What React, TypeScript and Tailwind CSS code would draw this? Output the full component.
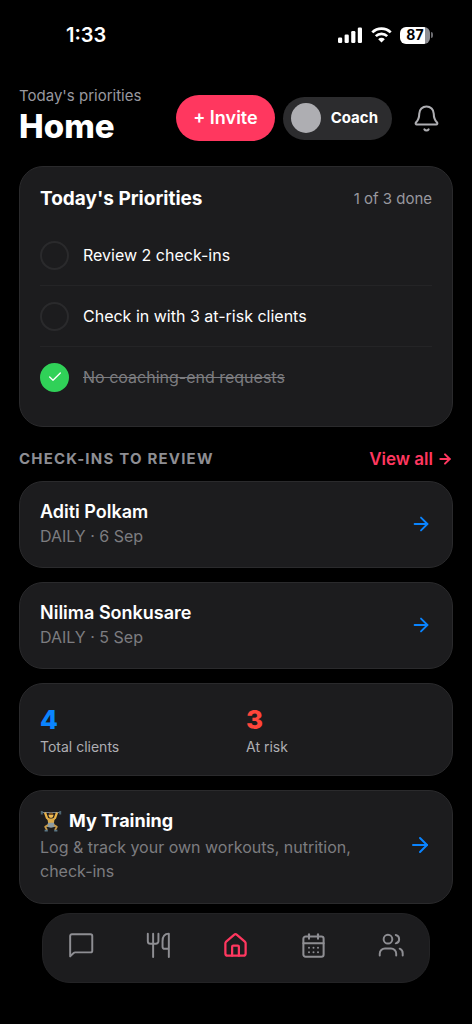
import { useState } from 'react';
import type { ReactNode } from 'react';
import { ArrowRight, Bell, CalendarDays, Check, House } from 'lucide-react';

interface Priority {
  id: string;
  label: string;
  done: boolean;
}

interface CheckIn {
  id: string;
  name: string;
  detail: string;
}

const initialPriorities: Priority[] = [
  { id: 'review', label: 'Review 2 check-ins', done: false },
  { id: 'at-risk', label: 'Check in with 3 at-risk clients', done: false },
  { id: 'requests', label: 'No coaching-end requests', done: true },
];

const checkIns: CheckIn[] = [
  { id: 'aditi', name: 'Aditi Polkam', detail: 'DAILY · 6 Sep' },
  { id: 'nilima', name: 'Nilima Sonkusare', detail: 'DAILY · 5 Sep' },
];

function StatusBar() {
  return (
    <div className="flex h-[70px] items-center justify-between pl-[66px] pr-[39px]">
      <span className="text-xl font-semibold">1:33</span>
      <div className="flex items-center gap-2">
        <svg width="25" height="16" viewBox="0 0 25 16" fill="currentColor" aria-hidden="true">
          <rect x="0" y="10.5" width="4.2" height="5.5" rx="1.3" />
          <rect x="6.6" y="7.5" width="4.2" height="8.5" rx="1.3" />
          <rect x="13.2" y="4" width="4.2" height="12" rx="1.3" />
          <rect x="19.8" y="0.5" width="4.2" height="15.5" rx="1.3" />
        </svg>
        <svg width="21" height="16" viewBox="0 0 21 16" fill="none" stroke="currentColor" aria-hidden="true">
          <path d="M1.3 5.4a13 13 0 0 1 18.4 0" strokeWidth="2.7" />
          <path d="M4.8 9.2a8.1 8.1 0 0 1 11.4 0" strokeWidth="2.6" />
          <path d="M10.5 15.4 7.2 12.2a4.7 4.7 0 0 1 6.6 0z" fill="currentColor" stroke="none" />
        </svg>
        <div className="flex items-center gap-px">
          <div className="flex h-[17px] w-[30px] items-center justify-center rounded-[6px] bg-linear-to-r from-white from-85% to-[#8e8e93] to-85% text-sm font-bold text-black">
            87
          </div>
          <div className="h-[6px] w-[2px] rounded-r-full bg-[#6b6b6f]" />
        </div>
      </div>
    </div>
  );
}

function Header() {
  return (
    <header className="flex items-center justify-between pt-4 pb-5">
      <div>
        <p className="text-[15px] leading-5 text-[#98989f]">Today's priorities</p>
        <h1 className="text-[33px] leading-[40px] font-extrabold">Home</h1>
      </div>
      <div className="flex items-center pt-1">
        <button type="button" className="h-[46px] rounded-full bg-[#ff375f] px-[17px] text-lg font-semibold">
          + Invite
        </button>
        <button
          type="button"
          className="ml-2 flex h-[43px] items-center gap-[10px] rounded-full bg-[#2c2c2e] pr-[14px] pl-2 text-[15px] font-bold"
        >
          <span className="h-[30px] w-[30px] rounded-full bg-[#aeaeb2]" />
          Coach
        </button>
        <button type="button" aria-label="Notifications" className="ml-5 mr-3 text-[#aeaeb2]">
          <Bell size={29} strokeWidth={1.7} />
        </button>
      </div>
    </header>
  );
}

function Card({ children }: { children: ReactNode }) {
  return <section className="rounded-3xl border border-[#2a2a2c] bg-[#1c1c1e] px-5">{children}</section>;
}

function PriorityList() {
  const [priorities, setPriorities] = useState(initialPriorities);
  const doneCount = priorities.filter((p) => p.done).length;

  const toggle = (id: string) => {
    setPriorities(priorities.map((p) => (p.id === id ? { ...p, done: !p.done } : p)));
  };

  return (
    <Card>
      <div className="flex items-center justify-between pt-[18px] pb-3">
        <h2 className="text-[19px] leading-7 font-bold">Today's Priorities</h2>
        <span className="text-[15px] text-[#98989f]">
          {doneCount} of {priorities.length} done
        </span>
      </div>
      <ul className="divide-y divide-[#242426] pb-[19px]">
        {priorities.map((p) => (
          <li key={p.id}>
            <label className="flex h-[60px] items-center gap-[14px]">
              <span className="relative flex h-[29px] w-[29px]">
                <input
                  type="checkbox"
                  checked={p.done}
                  onChange={() => toggle(p.id)}
                  className="h-full w-full appearance-none rounded-full border-2 border-[#2a2a2c] checked:border-[#30d158] checked:bg-[#30d158]"
                />
                {p.done && <Check size={16} strokeWidth={2} className="pointer-events-none absolute inset-0 m-auto" />}
              </span>
              <span className={p.done ? 'text-base text-[#7c7c80] line-through' : 'text-base'}>{p.label}</span>
            </label>
          </li>
        ))}
      </ul>
    </Card>
  );
}

function CheckInCard({ checkIn }: { checkIn: CheckIn }) {
  return (
    <Card>
      <a href="#check-in" className="flex items-center justify-between pt-[18px] pb-[19px]">
        <div>
          <h3 className="text-lg leading-6 font-semibold">{checkIn.name}</h3>
          <p className="text-base leading-6 text-[#7c7c80]">{checkIn.detail}</p>
        </div>
        <ArrowRight size={22} strokeWidth={2} className="text-[#0a84ff]" />
      </a>
    </Card>
  );
}

function Stats() {
  return (
    <Card>
      <div className="grid grid-cols-2 gap-5 pt-5 pb-[17px]">
        <div>
          <p className="text-[26px] leading-8 font-extrabold text-[#0a84ff]">4</p>
          <p className="text-sm leading-[22px] text-[#aeaeb2]">Total clients</p>
        </div>
        <div>
          <p className="text-[26px] leading-8 font-extrabold text-[#ff453a]">3</p>
          <p className="text-sm leading-[22px] text-[#aeaeb2]">At risk</p>
        </div>
      </div>
    </Card>
  );
}

function LifterIcon() {
  return (
    <svg width="22" height="22" viewBox="0 0 22 22" fill="none" role="img" aria-label="Weight lifter">
      <path d="M1 2.5h20" stroke="#76828c" strokeWidth="1" />
      <path d="M1.8 1v3.4M20.2 1v3.4" stroke="#4d6672" strokeWidth="2" />
      <path d="M5 2.5 7 8l3 2.5M17 2.5 15 8l-3 2.5" stroke="#e8b24a" strokeWidth="2.2" strokeLinejoin="round" />
      <circle cx="11" cy="5.6" r="2.4" fill="#efba50" />
      <path d="M8.6 5a2.4 2.4 0 0 1 4.8 0z" fill="#7c5425" />
      <path d="M7.4 8.6h7.2l-.9 6H8.3z" fill="#d9a94a" />
      <path d="M8 12.8h6l1.2 4-4.2 1-4.2-1z" fill="#8c9ca4" />
      <path d="m8 15-2.8 1.8L7 20M14 15l2.8 1.8L15 20" stroke="#c99a48" strokeWidth="1.8" strokeLinejoin="round" />
      <path d="M4.6 20.6h3.2M14.2 20.6h3.2" stroke="#5c7886" strokeWidth="1.6" />
    </svg>
  );
}

function TrainingCard() {
  return (
    <Card>
      <a href="#training" className="flex items-center justify-between gap-8 pt-4 pb-5">
        <div>
          <h3 className="flex items-center gap-[7px] text-lg leading-7 font-bold">
            <LifterIcon />
            My Training
          </h3>
          <p className="text-base leading-6 text-[#7c7c80]">
            Log &amp; track your own workouts, nutrition, check-ins
          </p>
        </div>
        <ArrowRight size={24} strokeWidth={2} className="shrink-0 text-[#0a84ff]" />
      </a>
    </Card>
  );
}

function NavIcon({ children }: { children: ReactNode }) {
  return (
    <svg
      width="26"
      height="26"
      viewBox="0 0 24 24"
      fill="none"
      stroke="currentColor"
      strokeWidth="1.8"
      strokeLinecap="round"
      strokeLinejoin="round"
      aria-hidden="true"
    >
      {children}
    </svg>
  );
}

const tabs = [
  {
    label: 'Messages',
    icon: (
      <NavIcon>
        <path d="M2 22.5V3.6A1.6 1.6 0 0 1 3.6 2h17.2a1.6 1.6 0 0 1 1.6 1.6v13.6a1.6 1.6 0 0 1-1.6 1.6H6.6a2 2 0 0 0-1.4.6z" />
      </NavIcon>
    ),
  },
  {
    label: 'Nutrition',
    icon: (
      <NavIcon>
        <path d="M2.6 1.5v7A2.4 2.4 0 0 0 5 10.9h5a2.4 2.4 0 0 0 2.4-2.4v-7M7.5 1.5V23" />
        <path d="M22 23V1.5c-4 0-5.800 3.200-5.800 7v5a2 2 0 0 0 2 2H22" />
      </NavIcon>
    ),
  },
  { label: 'Home', icon: <House size={27} strokeWidth={2} />, active: true },
  { label: 'Calendar', icon: <CalendarDays size={27} strokeWidth={1.8} /> },
  {
    label: 'Clients',
    icon: (
      <NavIcon>
        <circle cx="9.2" cy="6.6" r="4" />
        <path d="M1.6 21.800v-1.800a4.800 4.800 0 0 1 4.800-4.800h5.600a4.800 4.800 0 0 1 4.800 4.800v1.800" />
        <path d="M16.4 2.700a4 4 0 0 1 0 7.800M20 15.400a4.600 4.600 0 0 1 2.800 4.400v2" />
      </NavIcon>
    ),
  },
];

function TabBar() {
  return (
    <nav className="mx-[42px] mt-[9px] mb-10 flex h-[70px] items-center justify-around rounded-[28px] border border-[#232325] bg-[#1c1c1e] pb-[6px]">
      {tabs.map((tab) => (
        <button
          key={tab.label}
          type="button"
          aria-label={tab.label}
          className={tab.active ? 'text-[#ff375f]' : 'text-[#8e8e93]'}
        >
          {tab.icon}
        </button>
      ))}
    </nav>
  );
}

export default function App() {
  return (
    <div className="min-h-screen bg-black font-[Inter,sans-serif] text-white">
      <StatusBar />
      <main className="px-[19px]">
        <Header />
        <PriorityList />
        <div className="flex items-center justify-between pt-5 pb-[10px]">
          <h2 className="text-[15px] leading-6 font-bold tracking-[0.08em] text-[#8e8e93]">CHECK-INS TO REVIEW</h2>
          <a href="#check-ins" className="flex items-center gap-1 text-[17px] leading-6 font-semibold text-[#ff375f]">
            View all
            <ArrowRight size={16} strokeWidth={3} />
          </a>
        </div>
        <div className="flex flex-col gap-[14px]">
          {checkIns.map((checkIn) => (
            <CheckInCard key={checkIn.id} checkIn={checkIn} />
          ))}
          <Stats />
          <TrainingCard />
        </div>
      </main>
      <TabBar />
    </div>
  );
}
